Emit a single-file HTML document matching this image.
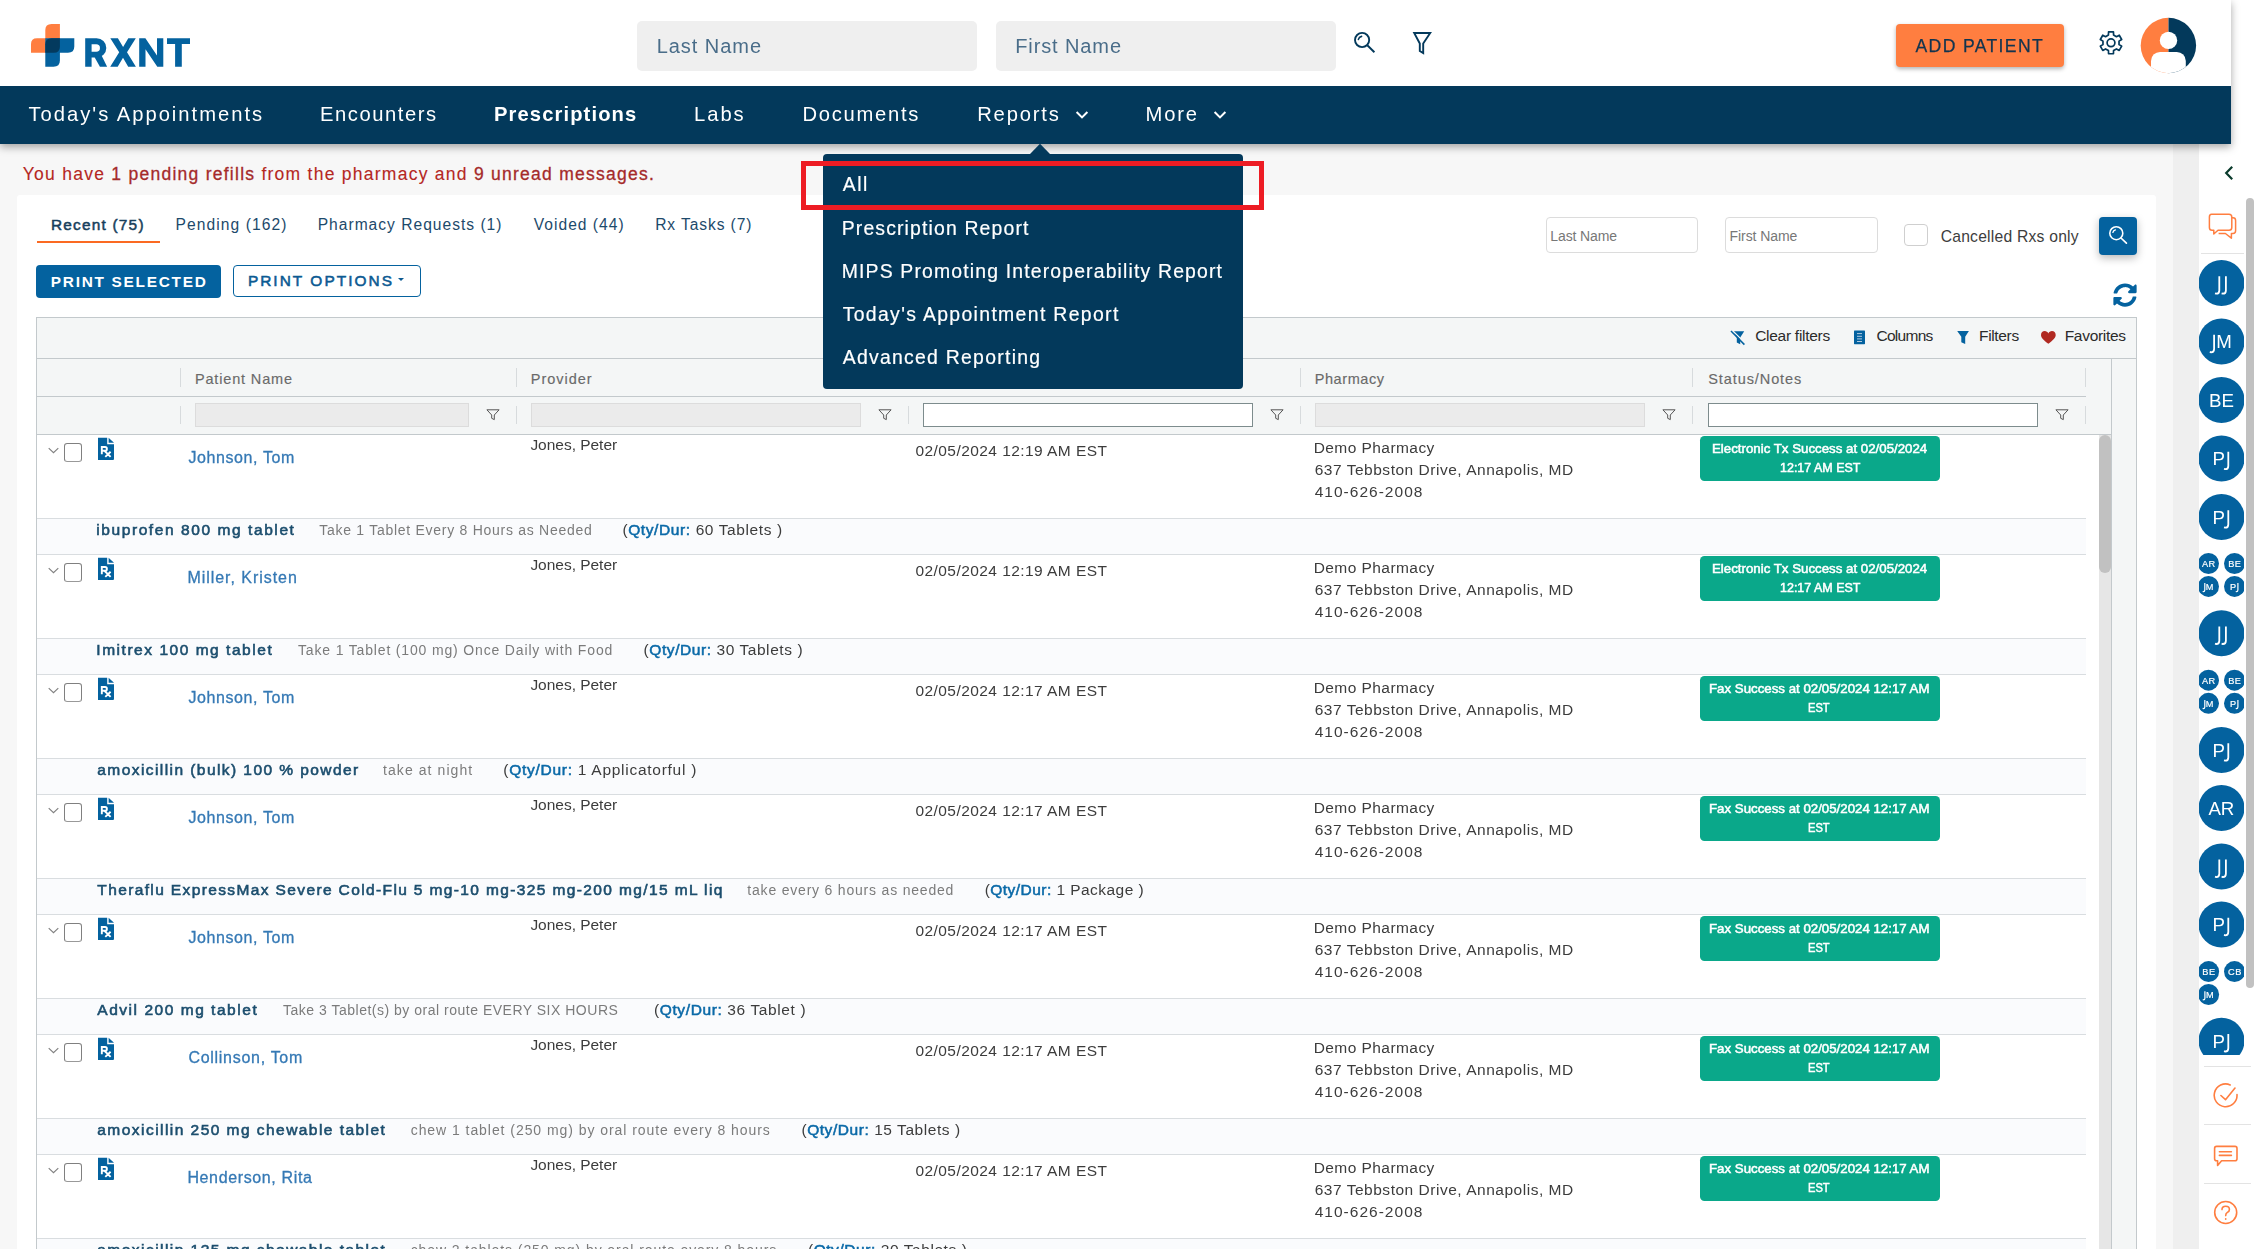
<!DOCTYPE html>
<html><head><meta charset="utf-8"><title>RXNT</title>
<style>
*{box-sizing:border-box;margin:0;padding:0}
html,body{width:2256px;height:1249px;overflow:hidden;background:#f7f7f7;font-family:"Liberation Sans",sans-serif}
.t{position:absolute;white-space:nowrap;line-height:1}
.a{position:absolute}
b{font-weight:700}
.g{position:absolute;left:0;top:0;width:2256px;height:1249px;will-change:transform}
#pg{position:absolute;left:0;top:0;width:2256px;height:1249px;overflow:hidden}
</style></head><body><div id="pg">

<div class="a" style="left:2173px;top:0;width:26px;height:1249px;background:#efefef"></div>
<div class="a" style="left:2199px;top:0;width:57px;height:1249px;background:#fff"></div>
<div class="a" style="left:17px;top:195px;width:2139px;height:1060px;background:#fff;border-radius:3px"></div>
<div id="t1" class="t" style="left:22.80px;top:166.19px;font-size:17.5px;color:#b5271f;font-weight:400;letter-spacing:1.258px;-webkit-text-stroke:0.12px #b5271f;">You have <span style="color:#a52a2a;-webkit-text-stroke:0.3px #a52a2a">1 pending refills</span> from the pharmacy and <span style="color:#a52a2a;-webkit-text-stroke:0.3px #a52a2a">9 unread messages.</span></div>
<div id="t2" class="t" style="left:50.90px;top:217.36px;font-size:15.4px;color:#173f5c;font-weight:400;letter-spacing:1.220px;-webkit-text-stroke:0.5px #173f5c;">Recent (75)</div>
<div class="a" style="left:37px;top:240.8px;width:123px;height:2.4px;background:#fb6a22"></div>
<div id="t3" class="t" style="left:175.60px;top:216.59px;font-size:15.6px;color:#1d4a6b;font-weight:400;letter-spacing:1.069px;">Pending (162)</div>
<div id="t4" class="t" style="left:317.70px;top:216.59px;font-size:15.6px;color:#1d4a6b;font-weight:400;letter-spacing:1.000px;">Pharmacy Requests (1)</div>
<div id="t5" class="t" style="left:533.80px;top:216.59px;font-size:15.6px;color:#1d4a6b;font-weight:400;letter-spacing:1.003px;">Voided (44)</div>
<div id="t6" class="t" style="left:655.20px;top:216.59px;font-size:15.6px;color:#1d4a6b;font-weight:400;letter-spacing:0.903px;">Rx Tasks (7)</div>
<div class="a" style="left:36px;top:265px;width:185px;height:33px;background:#04629f;border-radius:4px"></div>
<div id="t7" class="t" style="left:50.80px;top:274.16px;font-size:15.4px;color:#fff;font-weight:700;letter-spacing:1.728px;">PRINT SELECTED</div>
<div class="a" style="left:233px;top:265px;width:188px;height:32px;background:#fff;border:1px solid #04629f;border-radius:4px"></div>
<div id="t8" class="t" style="left:247.90px;top:273.26px;font-size:15.4px;color:#0c5a92;font-weight:400;letter-spacing:2.052px;-webkit-text-stroke:0.55px #0c5a92;">PRINT OPTIONS</div>
<div class="a" style="left:398.2px;top:278.2px;width:0;height:0;border-left:3.9px solid transparent;border-right:3.9px solid transparent;border-top:3.9px solid #0c5a92"></div>
<div class="a" style="left:1546px;top:217px;width:152px;height:36px;border:1px solid #dcdcdc;border-radius:4px;background:#fff"></div>
<div id="t9" class="t" style="left:1550.30px;top:229.45px;font-size:14px;color:#777;font-weight:400;letter-spacing:-0.115px;">Last Name</div>
<div class="a" style="left:1725px;top:217px;width:153px;height:36px;border:1px solid #dcdcdc;border-radius:4px;background:#fff"></div>
<div id="t10" class="t" style="left:1729.60px;top:229.45px;font-size:14px;color:#777;font-weight:400;letter-spacing:-0.074px;">First Name</div>
<div class="a" style="left:1904px;top:224px;width:24px;height:22px;border:1px solid #cfcfcf;border-radius:4px;background:#fff"></div>
<div id="t11" class="t" style="left:1940.70px;top:229.01px;font-size:15.7px;color:#3d3d3d;font-weight:400;letter-spacing:0.215px;">Cancelled Rxs only</div>
<div class="a" style="left:2099px;top:217px;width:38px;height:38px;background:#04629f;border-radius:4px;box-shadow:0 3px 8px rgba(0,0,0,.28)"></div>
<svg class="a" style="left:2099px;top:217px" width="38" height="38" viewBox="0 0 38 38"><circle cx="17.3" cy="16.2" r="6.5" fill="none" stroke="#fff" stroke-width="1.6"/><path d="M22 21 L27.4 26.2" stroke="#fff" stroke-width="1.7" stroke-linecap="round"/><path d="M13.9 15.4 A3.6 3.6 0 0 1 16.4 12.9" stroke="#fff" stroke-width="1.4" fill="none" stroke-linecap="round"/></svg>
<svg class="a" style="left:2112.6px;top:283.2px" width="24" height="24" viewBox="0 0 512 512"><path fill="#04629f" d="M370.72 133.28C339.458 104.008 298.888 87.962 255.848 88c-77.458.068-144.328 53.178-162.791 126.85-1.344 5.363-6.122 9.15-11.651 9.15H24.103c-7.498 0-13.194-6.807-11.807-14.176C33.933 94.924 134.813 8 256 8c66.448 0 126.791 26.136 171.315 68.685L463.03 40.97C478.149 25.851 504 36.559 504 57.941V192c0 13.255-10.745 24-24 24H345.941c-21.382 0-32.09-25.851-16.971-40.971l41.75-41.749zM32 296h134.059c21.382 0 32.09 25.851 16.971 40.971l-41.75 41.75c31.262 29.273 71.835 45.319 114.876 45.28 77.418-.07 144.315-53.144 162.787-126.849 1.344-5.363 6.122-9.15 11.651-9.15h57.304c7.498 0 13.194 6.807 11.807 14.176C478.067 417.076 377.187 504 256 504c-66.448 0-126.791-26.136-171.315-68.685L48.97 471.03C33.851 486.149 8 475.441 8 454.059V320c0-13.255 10.745-24 24-24z"/></svg>
<div class="a" style="left:36px;top:317px;width:2101px;height:940px;border:1px solid #c3c9cc;background:#fff"></div>
<div class="a" style="left:37px;top:318px;width:2099px;height:40px;background:#f4f6f6"></div>
<div class="a" style="left:37px;top:358px;width:2099px;height:1px;background:#c3c9cc"></div>
<div class="a" style="left:37px;top:359px;width:2074px;height:75px;background:#f4f6f6"></div>
<div class="a" style="left:37px;top:396px;width:2049px;height:1px;background:#c3c9cc"></div>
<div class="a" style="left:37px;top:434px;width:2074px;height:1px;background:#c3c9cc"></div>
<div class="a" style="left:2111px;top:359px;width:25px;height:900px;background:#f4f6f6;border-left:1px solid #c3c9cc"></div>
<div class="a" style="left:2099px;top:435px;width:12px;height:820px;background:#e6e6e6"></div>
<div class="a" style="left:2099px;top:435px;width:12px;height:138px;background:#c1c1c1;border-radius:6px"></div>
<div id="t12" class="t" style="left:1755.20px;top:327.98px;font-size:15.5px;color:#2b2b2b;font-weight:400;letter-spacing:-0.278px;">Clear filters</div>
<div id="t13" class="t" style="left:1876.50px;top:327.98px;font-size:15.5px;color:#2b2b2b;font-weight:400;letter-spacing:-0.720px;">Columns</div>
<div id="t14" class="t" style="left:1979.00px;top:327.98px;font-size:15.5px;color:#2b2b2b;font-weight:400;letter-spacing:-0.342px;">Filters</div>
<div id="t15" class="t" style="left:2064.70px;top:327.98px;font-size:15.5px;color:#2b2b2b;font-weight:400;letter-spacing:-0.300px;">Favorites</div>
<svg class="a" style="left:1730px;top:329px" width="17" height="17" viewBox="1730 329 17 17"><path d="M1733.6 331.2 H1744.2 L1740.2 337.4 V344.2 L1736.8 342.4 V337.4 Z" fill="#04629f"/><path d="M1732.2 330.2 L1745.6 343.6" stroke="#f4f6f6" stroke-width="1.3"/><path d="M1731 331 L1744.4 344.6" stroke="#04629f" stroke-width="1.5"/></svg>
<svg class="a" style="left:1853px;top:329px" width="14" height="17" viewBox="1853 329 14 17"><rect x="1854" y="330.6" width="11" height="13.6" rx="0.6" fill="#04629f"/><path d="M1857 333.6h5M1857 336.3h5M1857 338.9h5M1857 341.5h5" stroke="#c5d6e6" stroke-width="0.9"/></svg>
<svg class="a" style="left:1956px;top:330px" width="14" height="16" viewBox="1956 330 14 16"><path d="M1957.2 331.1 H1968.9 L1965.2 336.8 V344 L1961.3 342.2 V336.8 Z" fill="#04629f"/></svg>
<svg class="a" style="left:2040px;top:330px" width="17" height="15" viewBox="0 0 17 15"><path transform="translate(1 1.1) scale(0.93 0.905)" d="M7.9 14 C2.6 9.8 0 7.4 0 4.3 C0 1.8 1.8 0 4 0 C5.7 0 7.1 1 7.9 2.6 C8.7 1 10.1 0 11.8 0 C14 0 15.8 1.8 15.8 4.3 C15.8 7.4 13.2 9.8 7.9 14 Z" fill="#b02a22"/></svg>
<div id="t16" class="t" style="left:194.90px;top:371.93px;font-size:14.5px;color:#6a6a6a;font-weight:400;letter-spacing:0.846px;-webkit-text-stroke:0.15px #6a6a6a;">Patient Name</div>
<div id="t17" class="t" style="left:530.80px;top:371.93px;font-size:14.5px;color:#6a6a6a;font-weight:400;letter-spacing:0.976px;-webkit-text-stroke:0.15px #6a6a6a;">Provider</div>
<div id="t18" class="t" style="left:922.00px;top:371.93px;font-size:14.5px;color:#6a6a6a;font-weight:400;letter-spacing:0.808px;-webkit-text-stroke:0.15px #6a6a6a;">Date</div>
<div id="t19" class="t" style="left:1314.70px;top:371.93px;font-size:14.5px;color:#6a6a6a;font-weight:400;letter-spacing:0.581px;-webkit-text-stroke:0.15px #6a6a6a;">Pharmacy</div>
<div id="t20" class="t" style="left:1708.30px;top:371.93px;font-size:14.5px;color:#6a6a6a;font-weight:400;letter-spacing:0.903px;-webkit-text-stroke:0.15px #6a6a6a;">Status/Notes</div>
<div class="a" style="left:180px;top:368px;width:1px;height:19px;background:#d7dbdd"></div>
<div class="a" style="left:180px;top:406px;width:1px;height:18px;background:#d7dbdd"></div>
<div class="a" style="left:516px;top:368px;width:1px;height:19px;background:#d7dbdd"></div>
<div class="a" style="left:516px;top:406px;width:1px;height:18px;background:#d7dbdd"></div>
<div class="a" style="left:908px;top:368px;width:1px;height:19px;background:#d7dbdd"></div>
<div class="a" style="left:908px;top:406px;width:1px;height:18px;background:#d7dbdd"></div>
<div class="a" style="left:1300px;top:368px;width:1px;height:19px;background:#d7dbdd"></div>
<div class="a" style="left:1300px;top:406px;width:1px;height:18px;background:#d7dbdd"></div>
<div class="a" style="left:1692px;top:368px;width:1px;height:19px;background:#d7dbdd"></div>
<div class="a" style="left:1692px;top:406px;width:1px;height:18px;background:#d7dbdd"></div>
<div class="a" style="left:2085px;top:368px;width:1px;height:19px;background:#d7dbdd"></div>
<div class="a" style="left:2085px;top:406px;width:1px;height:18px;background:#d7dbdd"></div>
<div class="a" style="left:195px;top:403px;width:274px;height:24px;background:#ebebeb;border:1px solid #dcdcdc"></div>
<svg class="a" style="left:486px;top:409px" width="14" height="12" viewBox="0 0 14 12"><path d="M0.9 0.8 H13.1 L8.3 6 V10.6 L5.7 9.3 V6 Z" fill="none" stroke="#555" stroke-width="1" stroke-linejoin="round"/></svg>
<div class="a" style="left:531px;top:403px;width:330px;height:24px;background:#ebebeb;border:1px solid #dcdcdc"></div>
<svg class="a" style="left:878px;top:409px" width="14" height="12" viewBox="0 0 14 12"><path d="M0.9 0.8 H13.1 L8.3 6 V10.6 L5.7 9.3 V6 Z" fill="none" stroke="#555" stroke-width="1" stroke-linejoin="round"/></svg>
<div class="a" style="left:923px;top:403px;width:330px;height:24px;background:#fff;border:1px solid #7d8c8d"></div>
<svg class="a" style="left:1270px;top:409px" width="14" height="12" viewBox="0 0 14 12"><path d="M0.9 0.8 H13.1 L8.3 6 V10.6 L5.7 9.3 V6 Z" fill="none" stroke="#555" stroke-width="1" stroke-linejoin="round"/></svg>
<div class="a" style="left:1315px;top:403px;width:330px;height:24px;background:#ebebeb;border:1px solid #dcdcdc"></div>
<svg class="a" style="left:1662px;top:409px" width="14" height="12" viewBox="0 0 14 12"><path d="M0.9 0.8 H13.1 L8.3 6 V10.6 L5.7 9.3 V6 Z" fill="none" stroke="#555" stroke-width="1" stroke-linejoin="round"/></svg>
<div class="a" style="left:1708px;top:403px;width:330px;height:24px;background:#fff;border:1px solid #7d8c8d"></div>
<svg class="a" style="left:2055px;top:409px" width="14" height="12" viewBox="0 0 14 12"><path d="M0.9 0.8 H13.1 L8.3 6 V10.6 L5.7 9.3 V6 Z" fill="none" stroke="#555" stroke-width="1" stroke-linejoin="round"/></svg>
<div class="g">
<div class="a" style="left:37px;top:518px;width:2049px;height:37px;background:#fafbfd;border-top:1px solid #d9dde0;border-bottom:1px solid #d9dde0"></div>
<svg class="a" style="left:47px;top:446.9px" width="13" height="8" viewBox="0 0 13 8"><path d="M1.7 1.2 L6.5 5.6 L11.3 1.2" fill="none" stroke="#808080" stroke-width="1.15"/></svg>
<div class="a" style="left:64px;top:443.2px;width:18px;height:18.8px;border:1.6px solid #808080;border-bottom-color:#999;border-radius:3.2px;background:#fff"></div>
<svg class="a" style="left:97px;top:437.0px" width="18" height="24" viewBox="0 0 18 24"><path d="M1 0.8 H10.2 V7.2 H17 V21.9 Q17 22.9 16 22.9 H1 Z" fill="#04629f"/><path d="M11.6 0.8 L17 5.8 H11.6 Z" fill="#04629f"/><path d="M4.8 17.2 V10 H8 Q9.9 10 9.9 11.9 Q9.9 13.8 8 13.8 H4.8 M7.4 13.8 L13.6 19.9 M13.6 14.7 L8.3 19.9" fill="none" stroke="#fff" stroke-width="1.9"/></svg>
<div id="t21" class="t" style="left:188.40px;top:449.86px;font-size:16px;color:#3579b5;font-weight:400;letter-spacing:0.600px;-webkit-text-stroke:0.3px #3579b5;">Johnson, Tom</div>
<div id="t22" class="t" style="left:530.40px;top:437.18px;font-size:15.5px;color:#3c3c3c;font-weight:400;letter-spacing:-0.025px;">Jones, Peter</div>
<div id="t23" class="t" style="left:915.40px;top:443.18px;font-size:15.5px;color:#3c3c3c;font-weight:400;letter-spacing:0.443px;">02/05/2024 12:19 AM EST</div>
<div id="t24" class="t" style="left:1313.70px;top:440.18px;font-size:15.5px;color:#3c3c3c;font-weight:400;letter-spacing:0.434px;">Demo Pharmacy</div>
<div id="t25" class="t" style="left:1314.70px;top:462.08px;font-size:15.5px;color:#3c3c3c;font-weight:400;letter-spacing:0.521px;">637 Tebbston Drive, Annapolis, MD</div>
<div id="t26" class="t" style="left:1314.70px;top:483.88px;font-size:15.5px;color:#3c3c3c;font-weight:400;letter-spacing:1.017px;">410-626-2008</div>
<div class="a" style="left:1700px;top:436.0px;width:240px;height:44.7px;background:#0aa88a;border-radius:4.5px"></div>
<div id="t27" class="t" style="left:1711.93px;top:443.10px;font-size:12.4px;color:#fff;font-weight:400;letter-spacing:0.000px;-webkit-text-stroke:0.5px #fff;transform-origin:0 0;transform:scaleX(1.0715);">Electronic Tx Success at 02/05/2024</div>
<div id="t28" class="t" style="left:1779.70px;top:461.70px;font-size:12.4px;color:#fff;font-weight:400;letter-spacing:0.000px;-webkit-text-stroke:0.5px #fff;transform-origin:0 0;transform:scaleX(1.0070);">12:17 AM EST</div>
<div id="t29" class="t" style="left:96.30px;top:522.08px;font-size:15.5px;color:#1c4e6e;font-weight:400;letter-spacing:1.579px;-webkit-text-stroke:0.6px #1c4e6e;">ibuprofen 800 mg tablet</div>
<div id="t30" class="t" style="left:319.20px;top:523.35px;font-size:14px;color:#7b7b7b;font-weight:400;letter-spacing:0.726px;">Take 1 Tablet Every 8 Hours as Needed</div>
<div id="t31" class="t" style="left:622.40px;top:522.08px;font-size:15.5px;color:#3c3c3c;font-weight:400;letter-spacing:0.606px;">(<span style="color:#0b6aa8;-webkit-text-stroke:0.55px #0b6aa8">Qty/Dur:</span> 60 Tablets )</div>
<div class="a" style="left:37px;top:638px;width:2049px;height:37px;background:#fafbfd;border-top:1px solid #d9dde0;border-bottom:1px solid #d9dde0"></div>
<svg class="a" style="left:47px;top:566.9px" width="13" height="8" viewBox="0 0 13 8"><path d="M1.7 1.2 L6.5 5.6 L11.3 1.2" fill="none" stroke="#808080" stroke-width="1.15"/></svg>
<div class="a" style="left:64px;top:563.2px;width:18px;height:18.8px;border:1.6px solid #808080;border-bottom-color:#999;border-radius:3.2px;background:#fff"></div>
<svg class="a" style="left:97px;top:557.0px" width="18" height="24" viewBox="0 0 18 24"><path d="M1 0.8 H10.2 V7.2 H17 V21.9 Q17 22.9 16 22.9 H1 Z" fill="#04629f"/><path d="M11.6 0.8 L17 5.8 H11.6 Z" fill="#04629f"/><path d="M4.8 17.2 V10 H8 Q9.9 10 9.9 11.9 Q9.9 13.8 8 13.8 H4.8 M7.4 13.8 L13.6 19.9 M13.6 14.7 L8.3 19.9" fill="none" stroke="#fff" stroke-width="1.9"/></svg>
<div id="t32" class="t" style="left:187.40px;top:569.86px;font-size:16px;color:#3579b5;font-weight:400;letter-spacing:0.962px;-webkit-text-stroke:0.3px #3579b5;">Miller, Kristen</div>
<div id="t33" class="t" style="left:530.40px;top:557.18px;font-size:15.5px;color:#3c3c3c;font-weight:400;letter-spacing:-0.025px;">Jones, Peter</div>
<div id="t34" class="t" style="left:915.40px;top:563.18px;font-size:15.5px;color:#3c3c3c;font-weight:400;letter-spacing:0.443px;">02/05/2024 12:19 AM EST</div>
<div id="t35" class="t" style="left:1313.70px;top:560.18px;font-size:15.5px;color:#3c3c3c;font-weight:400;letter-spacing:0.434px;">Demo Pharmacy</div>
<div id="t36" class="t" style="left:1314.70px;top:582.08px;font-size:15.5px;color:#3c3c3c;font-weight:400;letter-spacing:0.521px;">637 Tebbston Drive, Annapolis, MD</div>
<div id="t37" class="t" style="left:1314.70px;top:603.88px;font-size:15.5px;color:#3c3c3c;font-weight:400;letter-spacing:1.017px;">410-626-2008</div>
<div class="a" style="left:1700px;top:556.0px;width:240px;height:44.7px;background:#0aa88a;border-radius:4.5px"></div>
<div id="t38" class="t" style="left:1711.93px;top:563.10px;font-size:12.4px;color:#fff;font-weight:400;letter-spacing:0.000px;-webkit-text-stroke:0.5px #fff;transform-origin:0 0;transform:scaleX(1.0715);">Electronic Tx Success at 02/05/2024</div>
<div id="t39" class="t" style="left:1779.70px;top:581.70px;font-size:12.4px;color:#fff;font-weight:400;letter-spacing:0.000px;-webkit-text-stroke:0.5px #fff;transform-origin:0 0;transform:scaleX(1.0070);">12:17 AM EST</div>
<div id="t40" class="t" style="left:96.30px;top:642.08px;font-size:15.5px;color:#1c4e6e;font-weight:400;letter-spacing:1.534px;-webkit-text-stroke:0.6px #1c4e6e;">Imitrex 100 mg tablet</div>
<div id="t41" class="t" style="left:298.00px;top:643.35px;font-size:14px;color:#7b7b7b;font-weight:400;letter-spacing:0.838px;">Take 1 Tablet (100 mg) Once Daily with Food</div>
<div id="t42" class="t" style="left:643.60px;top:642.08px;font-size:15.5px;color:#3c3c3c;font-weight:400;letter-spacing:0.568px;">(<span style="color:#0b6aa8;-webkit-text-stroke:0.55px #0b6aa8">Qty/Dur:</span> 30 Tablets )</div>
<div class="a" style="left:37px;top:758px;width:2049px;height:37px;background:#fafbfd;border-top:1px solid #d9dde0;border-bottom:1px solid #d9dde0"></div>
<svg class="a" style="left:47px;top:686.9px" width="13" height="8" viewBox="0 0 13 8"><path d="M1.7 1.2 L6.5 5.6 L11.3 1.2" fill="none" stroke="#808080" stroke-width="1.15"/></svg>
<div class="a" style="left:64px;top:683.2px;width:18px;height:18.8px;border:1.6px solid #808080;border-bottom-color:#999;border-radius:3.2px;background:#fff"></div>
<svg class="a" style="left:97px;top:677.0px" width="18" height="24" viewBox="0 0 18 24"><path d="M1 0.8 H10.2 V7.2 H17 V21.9 Q17 22.9 16 22.9 H1 Z" fill="#04629f"/><path d="M11.6 0.8 L17 5.8 H11.6 Z" fill="#04629f"/><path d="M4.8 17.2 V10 H8 Q9.9 10 9.9 11.9 Q9.9 13.8 8 13.8 H4.8 M7.4 13.8 L13.6 19.9 M13.6 14.7 L8.3 19.9" fill="none" stroke="#fff" stroke-width="1.9"/></svg>
<div id="t43" class="t" style="left:188.40px;top:689.86px;font-size:16px;color:#3579b5;font-weight:400;letter-spacing:0.600px;-webkit-text-stroke:0.3px #3579b5;">Johnson, Tom</div>
<div id="t44" class="t" style="left:530.40px;top:677.18px;font-size:15.5px;color:#3c3c3c;font-weight:400;letter-spacing:-0.025px;">Jones, Peter</div>
<div id="t45" class="t" style="left:915.40px;top:683.18px;font-size:15.5px;color:#3c3c3c;font-weight:400;letter-spacing:0.443px;">02/05/2024 12:17 AM EST</div>
<div id="t46" class="t" style="left:1313.70px;top:680.18px;font-size:15.5px;color:#3c3c3c;font-weight:400;letter-spacing:0.434px;">Demo Pharmacy</div>
<div id="t47" class="t" style="left:1314.70px;top:702.08px;font-size:15.5px;color:#3c3c3c;font-weight:400;letter-spacing:0.521px;">637 Tebbston Drive, Annapolis, MD</div>
<div id="t48" class="t" style="left:1314.70px;top:723.88px;font-size:15.5px;color:#3c3c3c;font-weight:400;letter-spacing:1.017px;">410-626-2008</div>
<div class="a" style="left:1700px;top:676.0px;width:240px;height:44.7px;background:#0aa88a;border-radius:4.5px"></div>
<div id="t49" class="t" style="left:1709.23px;top:683.10px;font-size:12.4px;color:#fff;font-weight:400;letter-spacing:0.000px;-webkit-text-stroke:0.5px #fff;transform-origin:0 0;transform:scaleX(1.0707);">Fax Success at 02/05/2024 12:17 AM</div>
<div id="t50" class="t" style="left:1808.40px;top:701.70px;font-size:12.4px;color:#fff;font-weight:400;letter-spacing:0.000px;-webkit-text-stroke:0.5px #fff;transform-origin:0 0;transform:scaleX(0.8963);">EST</div>
<div id="t51" class="t" style="left:97.30px;top:762.08px;font-size:15.5px;color:#1c4e6e;font-weight:400;letter-spacing:1.430px;-webkit-text-stroke:0.6px #1c4e6e;">amoxicillin (bulk) 100 % powder</div>
<div id="t52" class="t" style="left:383.00px;top:763.35px;font-size:14px;color:#7b7b7b;font-weight:400;letter-spacing:1.076px;">take at night</div>
<div id="t53" class="t" style="left:503.30px;top:762.08px;font-size:15.5px;color:#3c3c3c;font-weight:400;letter-spacing:0.732px;">(<span style="color:#0b6aa8;-webkit-text-stroke:0.55px #0b6aa8">Qty/Dur:</span> 1 Applicatorful )</div>
<div class="a" style="left:37px;top:878px;width:2049px;height:37px;background:#fafbfd;border-top:1px solid #d9dde0;border-bottom:1px solid #d9dde0"></div>
<svg class="a" style="left:47px;top:806.9px" width="13" height="8" viewBox="0 0 13 8"><path d="M1.7 1.2 L6.5 5.6 L11.3 1.2" fill="none" stroke="#808080" stroke-width="1.15"/></svg>
<div class="a" style="left:64px;top:803.2px;width:18px;height:18.8px;border:1.6px solid #808080;border-bottom-color:#999;border-radius:3.2px;background:#fff"></div>
<svg class="a" style="left:97px;top:797.0px" width="18" height="24" viewBox="0 0 18 24"><path d="M1 0.8 H10.2 V7.2 H17 V21.9 Q17 22.9 16 22.9 H1 Z" fill="#04629f"/><path d="M11.6 0.8 L17 5.8 H11.6 Z" fill="#04629f"/><path d="M4.8 17.2 V10 H8 Q9.9 10 9.9 11.9 Q9.9 13.8 8 13.8 H4.8 M7.4 13.8 L13.6 19.9 M13.6 14.7 L8.3 19.9" fill="none" stroke="#fff" stroke-width="1.9"/></svg>
<div id="t54" class="t" style="left:188.40px;top:809.86px;font-size:16px;color:#3579b5;font-weight:400;letter-spacing:0.600px;-webkit-text-stroke:0.3px #3579b5;">Johnson, Tom</div>
<div id="t55" class="t" style="left:530.40px;top:797.18px;font-size:15.5px;color:#3c3c3c;font-weight:400;letter-spacing:-0.025px;">Jones, Peter</div>
<div id="t56" class="t" style="left:915.40px;top:803.18px;font-size:15.5px;color:#3c3c3c;font-weight:400;letter-spacing:0.443px;">02/05/2024 12:17 AM EST</div>
<div id="t57" class="t" style="left:1313.70px;top:800.18px;font-size:15.5px;color:#3c3c3c;font-weight:400;letter-spacing:0.434px;">Demo Pharmacy</div>
<div id="t58" class="t" style="left:1314.70px;top:822.08px;font-size:15.5px;color:#3c3c3c;font-weight:400;letter-spacing:0.521px;">637 Tebbston Drive, Annapolis, MD</div>
<div id="t59" class="t" style="left:1314.70px;top:843.88px;font-size:15.5px;color:#3c3c3c;font-weight:400;letter-spacing:1.017px;">410-626-2008</div>
<div class="a" style="left:1700px;top:796.0px;width:240px;height:44.7px;background:#0aa88a;border-radius:4.5px"></div>
<div id="t60" class="t" style="left:1709.23px;top:803.10px;font-size:12.4px;color:#fff;font-weight:400;letter-spacing:0.000px;-webkit-text-stroke:0.5px #fff;transform-origin:0 0;transform:scaleX(1.0707);">Fax Success at 02/05/2024 12:17 AM</div>
<div id="t61" class="t" style="left:1808.40px;top:821.70px;font-size:12.4px;color:#fff;font-weight:400;letter-spacing:0.000px;-webkit-text-stroke:0.5px #fff;transform-origin:0 0;transform:scaleX(0.8963);">EST</div>
<div id="t62" class="t" style="left:97.30px;top:882.08px;font-size:15.5px;color:#1c4e6e;font-weight:400;letter-spacing:1.376px;-webkit-text-stroke:0.6px #1c4e6e;">Theraflu ExpressMax Severe Cold-Flu 5 mg-10 mg-325 mg-200 mg/15 mL liq</div>
<div id="t63" class="t" style="left:747.30px;top:883.35px;font-size:14px;color:#7b7b7b;font-weight:400;letter-spacing:0.801px;">take every 6 hours as needed</div>
<div id="t64" class="t" style="left:984.70px;top:882.08px;font-size:15.5px;color:#3c3c3c;font-weight:400;letter-spacing:0.453px;">(<span style="color:#0b6aa8;-webkit-text-stroke:0.55px #0b6aa8">Qty/Dur:</span> 1 Package )</div>
<div class="a" style="left:37px;top:998px;width:2049px;height:37px;background:#fafbfd;border-top:1px solid #d9dde0;border-bottom:1px solid #d9dde0"></div>
<svg class="a" style="left:47px;top:926.9px" width="13" height="8" viewBox="0 0 13 8"><path d="M1.7 1.2 L6.5 5.6 L11.3 1.2" fill="none" stroke="#808080" stroke-width="1.15"/></svg>
<div class="a" style="left:64px;top:923.2px;width:18px;height:18.8px;border:1.6px solid #808080;border-bottom-color:#999;border-radius:3.2px;background:#fff"></div>
<svg class="a" style="left:97px;top:917.0px" width="18" height="24" viewBox="0 0 18 24"><path d="M1 0.8 H10.2 V7.2 H17 V21.9 Q17 22.9 16 22.9 H1 Z" fill="#04629f"/><path d="M11.6 0.8 L17 5.8 H11.6 Z" fill="#04629f"/><path d="M4.8 17.2 V10 H8 Q9.9 10 9.9 11.9 Q9.9 13.8 8 13.8 H4.8 M7.4 13.8 L13.6 19.9 M13.6 14.7 L8.3 19.9" fill="none" stroke="#fff" stroke-width="1.9"/></svg>
<div id="t65" class="t" style="left:188.40px;top:929.86px;font-size:16px;color:#3579b5;font-weight:400;letter-spacing:0.600px;-webkit-text-stroke:0.3px #3579b5;">Johnson, Tom</div>
<div id="t66" class="t" style="left:530.40px;top:917.18px;font-size:15.5px;color:#3c3c3c;font-weight:400;letter-spacing:-0.025px;">Jones, Peter</div>
<div id="t67" class="t" style="left:915.40px;top:923.18px;font-size:15.5px;color:#3c3c3c;font-weight:400;letter-spacing:0.443px;">02/05/2024 12:17 AM EST</div>
<div id="t68" class="t" style="left:1313.70px;top:920.18px;font-size:15.5px;color:#3c3c3c;font-weight:400;letter-spacing:0.434px;">Demo Pharmacy</div>
<div id="t69" class="t" style="left:1314.70px;top:942.08px;font-size:15.5px;color:#3c3c3c;font-weight:400;letter-spacing:0.521px;">637 Tebbston Drive, Annapolis, MD</div>
<div id="t70" class="t" style="left:1314.70px;top:963.88px;font-size:15.5px;color:#3c3c3c;font-weight:400;letter-spacing:1.017px;">410-626-2008</div>
<div class="a" style="left:1700px;top:916.0px;width:240px;height:44.7px;background:#0aa88a;border-radius:4.5px"></div>
<div id="t71" class="t" style="left:1709.23px;top:923.10px;font-size:12.4px;color:#fff;font-weight:400;letter-spacing:0.000px;-webkit-text-stroke:0.5px #fff;transform-origin:0 0;transform:scaleX(1.0707);">Fax Success at 02/05/2024 12:17 AM</div>
<div id="t72" class="t" style="left:1808.40px;top:941.70px;font-size:12.4px;color:#fff;font-weight:400;letter-spacing:0.000px;-webkit-text-stroke:0.5px #fff;transform-origin:0 0;transform:scaleX(0.8963);">EST</div>
<div id="t73" class="t" style="left:97.30px;top:1002.08px;font-size:15.5px;color:#1c4e6e;font-weight:400;letter-spacing:1.532px;-webkit-text-stroke:0.6px #1c4e6e;">Advil 200 mg tablet</div>
<div id="t74" class="t" style="left:283.00px;top:1003.35px;font-size:14px;color:#7b7b7b;font-weight:400;letter-spacing:0.507px;">Take 3 Tablet(s) by oral route EVERY SIX HOURS</div>
<div id="t75" class="t" style="left:654.00px;top:1002.08px;font-size:15.5px;color:#3c3c3c;font-weight:400;letter-spacing:0.614px;">(<span style="color:#0b6aa8;-webkit-text-stroke:0.55px #0b6aa8">Qty/Dur:</span> 36 Tablet )</div>
<div class="a" style="left:37px;top:1118px;width:2049px;height:37px;background:#fafbfd;border-top:1px solid #d9dde0;border-bottom:1px solid #d9dde0"></div>
<svg class="a" style="left:47px;top:1046.9px" width="13" height="8" viewBox="0 0 13 8"><path d="M1.7 1.2 L6.5 5.6 L11.3 1.2" fill="none" stroke="#808080" stroke-width="1.15"/></svg>
<div class="a" style="left:64px;top:1043.2px;width:18px;height:18.8px;border:1.6px solid #808080;border-bottom-color:#999;border-radius:3.2px;background:#fff"></div>
<svg class="a" style="left:97px;top:1037.0px" width="18" height="24" viewBox="0 0 18 24"><path d="M1 0.8 H10.2 V7.2 H17 V21.9 Q17 22.9 16 22.9 H1 Z" fill="#04629f"/><path d="M11.6 0.8 L17 5.8 H11.6 Z" fill="#04629f"/><path d="M4.8 17.2 V10 H8 Q9.9 10 9.9 11.9 Q9.9 13.8 8 13.8 H4.8 M7.4 13.8 L13.6 19.9 M13.6 14.7 L8.3 19.9" fill="none" stroke="#fff" stroke-width="1.9"/></svg>
<div id="t76" class="t" style="left:188.40px;top:1049.86px;font-size:16px;color:#3579b5;font-weight:400;letter-spacing:0.714px;-webkit-text-stroke:0.3px #3579b5;">Collinson, Tom</div>
<div id="t77" class="t" style="left:530.40px;top:1037.18px;font-size:15.5px;color:#3c3c3c;font-weight:400;letter-spacing:-0.025px;">Jones, Peter</div>
<div id="t78" class="t" style="left:915.40px;top:1043.18px;font-size:15.5px;color:#3c3c3c;font-weight:400;letter-spacing:0.443px;">02/05/2024 12:17 AM EST</div>
<div id="t79" class="t" style="left:1313.70px;top:1040.18px;font-size:15.5px;color:#3c3c3c;font-weight:400;letter-spacing:0.434px;">Demo Pharmacy</div>
<div id="t80" class="t" style="left:1314.70px;top:1062.08px;font-size:15.5px;color:#3c3c3c;font-weight:400;letter-spacing:0.521px;">637 Tebbston Drive, Annapolis, MD</div>
<div id="t81" class="t" style="left:1314.70px;top:1083.88px;font-size:15.5px;color:#3c3c3c;font-weight:400;letter-spacing:1.017px;">410-626-2008</div>
<div class="a" style="left:1700px;top:1036.0px;width:240px;height:44.7px;background:#0aa88a;border-radius:4.5px"></div>
<div id="t82" class="t" style="left:1709.23px;top:1043.10px;font-size:12.4px;color:#fff;font-weight:400;letter-spacing:0.000px;-webkit-text-stroke:0.5px #fff;transform-origin:0 0;transform:scaleX(1.0707);">Fax Success at 02/05/2024 12:17 AM</div>
<div id="t83" class="t" style="left:1808.40px;top:1061.70px;font-size:12.4px;color:#fff;font-weight:400;letter-spacing:0.000px;-webkit-text-stroke:0.5px #fff;transform-origin:0 0;transform:scaleX(0.8963);">EST</div>
<div id="t84" class="t" style="left:97.30px;top:1122.08px;font-size:15.5px;color:#1c4e6e;font-weight:400;letter-spacing:1.457px;-webkit-text-stroke:0.6px #1c4e6e;">amoxicillin 250 mg chewable tablet</div>
<div id="t85" class="t" style="left:410.70px;top:1123.35px;font-size:14px;color:#7b7b7b;font-weight:400;letter-spacing:0.944px;">chew 1 tablet (250 mg) by oral route every 8 hours</div>
<div id="t86" class="t" style="left:801.40px;top:1122.08px;font-size:15.5px;color:#3c3c3c;font-weight:400;letter-spacing:0.559px;">(<span style="color:#0b6aa8;-webkit-text-stroke:0.55px #0b6aa8">Qty/Dur:</span> 15 Tablets )</div>
<div class="a" style="left:37px;top:1238px;width:2049px;height:37px;background:#fafbfd;border-top:1px solid #d9dde0;border-bottom:1px solid #d9dde0"></div>
<svg class="a" style="left:47px;top:1166.9px" width="13" height="8" viewBox="0 0 13 8"><path d="M1.7 1.2 L6.5 5.6 L11.3 1.2" fill="none" stroke="#808080" stroke-width="1.15"/></svg>
<div class="a" style="left:64px;top:1163.2px;width:18px;height:18.8px;border:1.6px solid #808080;border-bottom-color:#999;border-radius:3.2px;background:#fff"></div>
<svg class="a" style="left:97px;top:1157.0px" width="18" height="24" viewBox="0 0 18 24"><path d="M1 0.8 H10.2 V7.2 H17 V21.9 Q17 22.9 16 22.9 H1 Z" fill="#04629f"/><path d="M11.6 0.8 L17 5.8 H11.6 Z" fill="#04629f"/><path d="M4.8 17.2 V10 H8 Q9.9 10 9.9 11.9 Q9.9 13.8 8 13.8 H4.8 M7.4 13.8 L13.6 19.9 M13.6 14.7 L8.3 19.9" fill="none" stroke="#fff" stroke-width="1.9"/></svg>
<div id="t87" class="t" style="left:187.40px;top:1169.86px;font-size:16px;color:#3579b5;font-weight:400;letter-spacing:0.634px;-webkit-text-stroke:0.3px #3579b5;">Henderson, Rita</div>
<div id="t88" class="t" style="left:530.40px;top:1157.18px;font-size:15.5px;color:#3c3c3c;font-weight:400;letter-spacing:-0.025px;">Jones, Peter</div>
<div id="t89" class="t" style="left:915.40px;top:1163.18px;font-size:15.5px;color:#3c3c3c;font-weight:400;letter-spacing:0.443px;">02/05/2024 12:17 AM EST</div>
<div id="t90" class="t" style="left:1313.70px;top:1160.18px;font-size:15.5px;color:#3c3c3c;font-weight:400;letter-spacing:0.434px;">Demo Pharmacy</div>
<div id="t91" class="t" style="left:1314.70px;top:1182.08px;font-size:15.5px;color:#3c3c3c;font-weight:400;letter-spacing:0.521px;">637 Tebbston Drive, Annapolis, MD</div>
<div id="t92" class="t" style="left:1314.70px;top:1203.88px;font-size:15.5px;color:#3c3c3c;font-weight:400;letter-spacing:1.017px;">410-626-2008</div>
<div class="a" style="left:1700px;top:1156.0px;width:240px;height:44.7px;background:#0aa88a;border-radius:4.5px"></div>
<div id="t93" class="t" style="left:1709.23px;top:1163.10px;font-size:12.4px;color:#fff;font-weight:400;letter-spacing:0.000px;-webkit-text-stroke:0.5px #fff;transform-origin:0 0;transform:scaleX(1.0707);">Fax Success at 02/05/2024 12:17 AM</div>
<div id="t94" class="t" style="left:1808.40px;top:1181.70px;font-size:12.4px;color:#fff;font-weight:400;letter-spacing:0.000px;-webkit-text-stroke:0.5px #fff;transform-origin:0 0;transform:scaleX(0.8963);">EST</div>
<div id="t95" class="t" style="left:97.30px;top:1242.08px;font-size:15.5px;color:#1c4e6e;font-weight:400;letter-spacing:1.457px;-webkit-text-stroke:0.6px #1c4e6e;">amoxicillin 125 mg chewable tablet</div>
<div id="t96" class="t" style="left:410.70px;top:1243.35px;font-size:14px;color:#7b7b7b;font-weight:400;letter-spacing:0.915px;">chew 2 tablets (250 mg) by oral route every 8 hours</div>
<div id="t97" class="t" style="left:807.90px;top:1242.08px;font-size:15.5px;color:#3c3c3c;font-weight:400;letter-spacing:0.568px;">(<span style="color:#0b6aa8;-webkit-text-stroke:0.55px #0b6aa8">Qty/Dur:</span> 20 Tablets )</div>
</div>
<div class="a" style="left:2199px;top:150px;width:45px;height:905px;overflow:hidden">
<svg class="a" style="left:0;top:0" width="47" height="905" viewBox="0 0 47 905">
<circle cx="22.50" cy="133.00" r="23.00" fill="#04629f"/><path d="M20.30 126.18 V140.42 Q20.30 143.72 17.30 143.72 L16.00 143.32" fill="none" stroke="#fff" stroke-width="1.80" stroke-linejoin="round"/><path d="M26.90 126.18 V140.42 Q26.90 143.72 23.90 143.72 L22.60 143.32" fill="none" stroke="#fff" stroke-width="1.80" stroke-linejoin="round"/>
<circle cx="22.50" cy="191.60" r="23.00" fill="#04629f"/><path d="M15.10 184.78 V199.02 Q15.10 202.32 12.10 202.32 L10.80 201.92" fill="none" stroke="#fff" stroke-width="1.80" stroke-linejoin="round"/><text x="17.20" y="198.42" font-size="18.70" fill="#fff" font-family="Liberation Sans,sans-serif">M</text>
<circle cx="22.50" cy="250.00" r="23.00" fill="#04629f"/><text x="10.00" y="256.82" font-size="18.70" fill="#fff" font-family="Liberation Sans,sans-serif">BE</text>
<circle cx="22.50" cy="308.50" r="23.00" fill="#04629f"/><text x="13.50" y="315.32" font-size="18.70" fill="#fff" font-family="Liberation Sans,sans-serif">P</text><path d="M29.30 301.68 V315.92 Q29.30 319.22 26.30 319.22 L25.00 318.82" fill="none" stroke="#fff" stroke-width="1.80" stroke-linejoin="round"/>
<circle cx="22.50" cy="367.00" r="23.00" fill="#04629f"/><text x="13.50" y="373.82" font-size="18.70" fill="#fff" font-family="Liberation Sans,sans-serif">P</text><path d="M29.30 360.18 V374.42 Q29.30 377.72 26.30 377.72 L25.00 377.32" fill="none" stroke="#fff" stroke-width="1.80" stroke-linejoin="round"/>
<circle cx="22.50" cy="483.30" r="23.00" fill="#04629f"/><path d="M20.30 476.48 V490.72 Q20.30 494.02 17.30 494.02 L16.00 493.62" fill="none" stroke="#fff" stroke-width="1.80" stroke-linejoin="round"/><path d="M26.90 476.48 V490.72 Q26.90 494.02 23.90 494.02 L22.60 493.62" fill="none" stroke="#fff" stroke-width="1.80" stroke-linejoin="round"/>
<circle cx="22.50" cy="600.00" r="23.00" fill="#04629f"/><text x="13.50" y="606.82" font-size="18.70" fill="#fff" font-family="Liberation Sans,sans-serif">P</text><path d="M29.30 593.18 V607.42 Q29.30 610.72 26.30 610.72 L25.00 610.32" fill="none" stroke="#fff" stroke-width="1.80" stroke-linejoin="round"/>
<circle cx="22.50" cy="658.00" r="23.00" fill="#04629f"/><text x="9.40" y="664.82" font-size="18.70" fill="#fff" font-family="Liberation Sans,sans-serif">AR</text>
<circle cx="22.50" cy="716.40" r="23.00" fill="#04629f"/><path d="M20.30 709.58 V723.82 Q20.30 727.12 17.30 727.12 L16.00 726.72" fill="none" stroke="#fff" stroke-width="1.80" stroke-linejoin="round"/><path d="M26.90 709.58 V723.82 Q26.90 727.12 23.90 727.12 L22.60 726.72" fill="none" stroke="#fff" stroke-width="1.80" stroke-linejoin="round"/>
<circle cx="22.50" cy="774.60" r="23.00" fill="#04629f"/><text x="13.50" y="781.42" font-size="18.70" fill="#fff" font-family="Liberation Sans,sans-serif">P</text><path d="M29.30 767.78 V782.02 Q29.30 785.32 26.30 785.32 L25.00 784.92" fill="none" stroke="#fff" stroke-width="1.80" stroke-linejoin="round"/>
<circle cx="22.50" cy="890.80" r="23.00" fill="#04629f"/><text x="13.50" y="897.62" font-size="18.70" fill="#fff" font-family="Liberation Sans,sans-serif">P</text><path d="M29.30 883.98 V898.22 Q29.30 901.52 26.30 901.52 L25.00 901.12" fill="none" stroke="#fff" stroke-width="1.80" stroke-linejoin="round"/>
<circle cx="9.50" cy="413.50" r="10.50" fill="#04629f"/><text x="2.95" y="416.85" font-size="9.20" fill="#fff" font-family="Liberation Sans,sans-serif" stroke="#fff" stroke-width="0.2" letter-spacing="0.45">AR</text>
<circle cx="35.50" cy="413.50" r="10.50" fill="#04629f"/><text x="29.25" y="416.85" font-size="9.20" fill="#fff" font-family="Liberation Sans,sans-serif" stroke="#fff" stroke-width="0.2" letter-spacing="0.45">BE</text>
<circle cx="9.50" cy="436.40" r="10.50" fill="#04629f"/><path d="M5.80 433.05 V440.05 Q5.80 441.70 4.30 441.70 L3.65 441.50" fill="none" stroke="#fff" stroke-width="1.20" stroke-linejoin="round"/><text x="6.85" y="439.75" font-size="9.20" fill="#fff" font-family="Liberation Sans,sans-serif" stroke="#fff" stroke-width="0.2" letter-spacing="0.45">M</text>
<circle cx="35.50" cy="436.40" r="10.50" fill="#04629f"/><text x="31.00" y="439.75" font-size="9.20" fill="#fff" font-family="Liberation Sans,sans-serif" stroke="#fff" stroke-width="0.2" letter-spacing="0.45">P</text><path d="M38.90 433.05 V440.05 Q38.90 441.70 37.40 441.70 L36.75 441.50" fill="none" stroke="#fff" stroke-width="1.20" stroke-linejoin="round"/>
<circle cx="9.50" cy="530.20" r="10.50" fill="#04629f"/><text x="2.95" y="533.55" font-size="9.20" fill="#fff" font-family="Liberation Sans,sans-serif" stroke="#fff" stroke-width="0.2" letter-spacing="0.45">AR</text>
<circle cx="35.50" cy="530.20" r="10.50" fill="#04629f"/><text x="29.25" y="533.55" font-size="9.20" fill="#fff" font-family="Liberation Sans,sans-serif" stroke="#fff" stroke-width="0.2" letter-spacing="0.45">BE</text>
<circle cx="9.50" cy="553.30" r="10.50" fill="#04629f"/><path d="M5.80 549.95 V556.95 Q5.80 558.60 4.30 558.60 L3.65 558.40" fill="none" stroke="#fff" stroke-width="1.20" stroke-linejoin="round"/><text x="6.85" y="556.65" font-size="9.20" fill="#fff" font-family="Liberation Sans,sans-serif" stroke="#fff" stroke-width="0.2" letter-spacing="0.45">M</text>
<circle cx="35.50" cy="553.30" r="10.50" fill="#04629f"/><text x="31.00" y="556.65" font-size="9.20" fill="#fff" font-family="Liberation Sans,sans-serif" stroke="#fff" stroke-width="0.2" letter-spacing="0.45">P</text><path d="M38.90 549.95 V556.95 Q38.90 558.60 37.40 558.60 L36.75 558.40" fill="none" stroke="#fff" stroke-width="1.20" stroke-linejoin="round"/>
<circle cx="9.60" cy="821.60" r="10.50" fill="#04629f"/><text x="3.35" y="824.95" font-size="9.20" fill="#fff" font-family="Liberation Sans,sans-serif" stroke="#fff" stroke-width="0.2" letter-spacing="0.45">BE</text>
<circle cx="35.50" cy="821.60" r="10.50" fill="#04629f"/><text x="29.10" y="824.95" font-size="9.20" fill="#fff" font-family="Liberation Sans,sans-serif" stroke="#fff" stroke-width="0.2" letter-spacing="0.45">CB</text>
<circle cx="9.60" cy="844.50" r="10.50" fill="#04629f"/><path d="M5.90 841.15 V848.15 Q5.90 849.80 4.40 849.80 L3.75 849.60" fill="none" stroke="#fff" stroke-width="1.20" stroke-linejoin="round"/><text x="6.95" y="847.85" font-size="9.20" fill="#fff" font-family="Liberation Sans,sans-serif" stroke="#fff" stroke-width="0.2" letter-spacing="0.45">M</text>
</svg>
</div>
<svg class="a" style="left:2222px;top:164px" width="14" height="18" viewBox="0 0 14 18"><path d="M10.2 2.8 L4.2 9 L10.2 15.2" fill="none" stroke="#0a3b2c" stroke-width="2.2"/></svg>
<svg class="a" style="left:2207px;top:211px" width="32" height="30" viewBox="0 0 32 30"><g fill="none" stroke="#ff7e40" stroke-width="1.5" stroke-linejoin="round"><path d="M4.5 3.2 H22 Q24.8 3.2 24.8 6 V16.4 Q24.8 19.2 22 19.2 H11 L6.8 23 V19.2 H5 Q2.4 19.2 2.4 16.4 V6 Q2.4 3.2 4.5 3.2 Z"/><path d="M24.8 6.8 H26 Q28.6 6.8 28.6 9.4 V19.8 Q28.6 22.5 26 22.5 H24.4 V27.2 L18.4 22.5 H11.6"/></g></svg>
<div class="a" style="left:2201px;top:253px;width:43px;height:1px;background:#e3e3e3"></div>
<div class="a" style="left:2204px;top:1066px;width:47px;height:1px;background:#e3e3e3"></div>
<div class="a" style="left:2204px;top:1124px;width:47px;height:1px;background:#e3e3e3"></div>
<div class="a" style="left:2204px;top:1183px;width:47px;height:1px;background:#e3e3e3"></div>
<div class="a" style="left:2246px;top:198px;width:8px;height:790px;border-radius:4px;background:#c1c1c1"></div>
<svg class="a" style="left:2212px;top:1082px" width="28" height="28" viewBox="0 0 28 28"><g fill="none" stroke="#ff7e40" stroke-width="1.6" stroke-linecap="round" stroke-linejoin="round"><path d="M25 12.6 A11.4 11.4 0 1 1 18.2 2.9"/><path d="M8.9 13.5 L13.5 17.7 L23 6"/></g></svg>
<svg class="a" style="left:2212px;top:1143px" width="28" height="26" viewBox="0 0 28 26"><g fill="none" stroke="#ff7e40" stroke-width="1.6" stroke-linecap="round" stroke-linejoin="round"><path d="M4.6 3.4 H23 Q25 3.4 25 5.4 V15.8 Q25 17.8 23 17.8 H9.6 L5.6 22.4 V17.8 H4.6 Q2.6 17.8 2.6 15.8 V5.4 Q2.6 3.4 4.6 3.4 Z"/><path d="M7.4 8.8 H19.4 M7.4 12.4 H19.4"/></g></svg>
<svg class="a" style="left:2212px;top:1199px" width="28" height="28" viewBox="0 0 28 28"><g fill="none" stroke="#ff7e40" stroke-width="1.6" stroke-linecap="round"><circle cx="13.7" cy="13.5" r="11"/><path d="M10 10.6 Q10 7.2 13.7 7.2 Q17.4 7.2 17.4 10.4 Q17.4 12.4 15.4 13.4 Q13.7 14.4 13.7 16.6"/><path d="M13.7 19.8 V20.2"/></g></svg>
<div class="a" style="left:0;top:0;width:2231px;height:144px;background:#fff;box-shadow:0 3px 8px rgba(0,0,0,.35)"></div>
<div class="a" style="left:0;top:86px;width:2231px;height:58px;background:#03395b"></div>
<svg class="a" style="left:30px;top:23px" width="46" height="45" viewBox="30 23 46 45"><path d="M45.3 52.7 H31 V44 Q31 38.2 37 38.2 H45.3 V30 Q45.3 24 51.5 24 H59.9 V52.7 Z" fill="#ff7e40"/><path d="M45.3 38.2 H74.3 V46.5 Q74.3 52.7 68 52.7 H59.9 V60.5 Q59.9 66.7 53.5 66.7 H45.3 Z" fill="#04629f"/><path d="M45.3 52.7 V44.2 Q45.3 38.2 51.5 38.2 H59.9 V46.7 Q59.9 52.7 53.7 52.7 Z" fill="#033a5e"/></svg>
<svg class="a" style="left:84px;top:37px" width="108" height="31" viewBox="84 37 108 31"><g fill="#04629f"><path fill-rule="evenodd" d="M85.2 38.2 H96.6 A9.7 9.7 0 0 1 96.6 57.6 H91.6 V66.7 H85.2 Z M91.6 44.2 V51.7 H96.2 A3.75 3.75 0 0 0 96.2 44.2 Z"/><path d="M94.6 57.2 L101.6 55.6 L107.1 66.7 H99.9 Z"/><path d="M110.3 38.2 H117.9 L123.1 47 L128.3 38.2 H135.8 L127 52.2 L135.9 66.7 H128.2 L123 57.8 L117.7 66.7 H110.2 L119.2 52.2 Z"/><path d="M139.2 38.2 H145.4 L157 55.6 V38.2 H163.3 V66.7 H157.3 L145.5 49.2 V66.7 H139.2 Z"/><path d="M167 38.2 H190 V44 H181.8 V66.7 H175.1 V44 H167 Z"/></g></svg>
<div class="a" style="left:637px;top:21px;width:340px;height:50px;background:#efefef;border-radius:5px"></div>
<div class="a" style="left:996px;top:21px;width:340px;height:50px;background:#efefef;border-radius:5px"></div>
<div id="t98" class="t" style="left:656.70px;top:36.37px;font-size:20px;color:#4a6d89;font-weight:400;letter-spacing:0.963px;">Last Name</div>
<div id="t99" class="t" style="left:1015.20px;top:36.37px;font-size:20px;color:#4a6d89;font-weight:400;letter-spacing:0.892px;">First Name</div>
<svg class="a" style="left:1350px;top:28px" width="30" height="30" viewBox="1350 28 30 30"><g fill="none" stroke="#03395b" stroke-width="1.9"><circle cx="1362.1" cy="40" r="7.1"/><path d="M1367.3 45.3 L1374.4 52.2"/><path d="M1358.4 39.4 A4 4 0 0 1 1361.6 36.4" stroke-linecap="round" stroke-width="1.6"/></g></svg>
<svg class="a" style="left:1408px;top:28px" width="30" height="30" viewBox="1408 28 30 30"><path d="M1414.2 33 H1430.2 L1423.2 43.6 V53 L1419.8 51 V43.6 Z" fill="none" stroke="#03395b" stroke-width="1.9" stroke-linejoin="miter"/></svg>
<div class="a" style="left:1896px;top:24px;width:168px;height:43px;background:#ff7e40;border-radius:4px;box-shadow:0 2px 4px rgba(0,0,0,.3)"></div>
<div id="t100" class="t" style="left:1915.50px;top:37.70px;font-size:17.6px;color:#12344f;font-weight:400;letter-spacing:1.353px;-webkit-text-stroke:0.25px #12344f;">ADD PATIENT</div>
<svg class="a" style="left:2096px;top:28px" width="30" height="30" viewBox="2096 28 30 30"><g fill="none" stroke="#03395b" stroke-width="1.7" stroke-linejoin="round"><path d="M2108.42 35.02 L2108.56 31.87 L2113.44 31.87 L2113.58 35.02 L2116.45 36.67 L2119.24 35.22 L2121.69 39.45 L2119.03 41.14 L2119.03 44.46 L2121.69 46.15 L2119.24 50.38 L2116.45 48.93 L2113.58 50.58 L2113.44 53.73 L2108.56 53.73 L2108.42 50.58 L2105.55 48.93 L2102.76 50.38 L2100.31 46.15 L2102.97 44.46 L2102.97 41.14 L2100.31 39.45 L2102.76 35.22 L2105.55 36.67 Z"/><circle cx="2111" cy="42.8" r="3.9"/></g></svg>
<svg class="a" style="left:2140px;top:17px" width="57" height="57" viewBox="2140 17 57 57"><defs><clipPath id="av"><circle cx="2168.4" cy="45.5" r="27.7"/></clipPath></defs><g clip-path="url(#av)"><rect x="2140" y="17" width="28.5" height="57" fill="#ff7e40"/><rect x="2168.5" y="17" width="28.5" height="57" fill="#03395b"/><circle cx="2168.5" cy="40.4" r="8.7" fill="#fff"/><rect x="2151" y="51.9" width="34.8" height="40" rx="9" fill="#fff"/></g></svg>
<div class="g">
<div id="t101" class="t" style="left:28.50px;top:103.70px;font-size:20.2px;color:#fff;font-weight:400;letter-spacing:1.991px;">Today's Appointments</div>
<div id="t102" class="t" style="left:320.00px;top:103.70px;font-size:20.2px;color:#fff;font-weight:400;letter-spacing:1.552px;">Encounters</div>
<div id="t103" class="t" style="left:494.00px;top:103.70px;font-size:20.2px;color:#fff;font-weight:700;letter-spacing:1.100px;">Prescriptions</div>
<div id="t104" class="t" style="left:694.00px;top:103.70px;font-size:20.2px;color:#fff;font-weight:400;letter-spacing:1.971px;">Labs</div>
<div id="t105" class="t" style="left:802.50px;top:103.70px;font-size:20.2px;color:#fff;font-weight:400;letter-spacing:1.723px;">Documents</div>
<div id="t106" class="t" style="left:977.20px;top:103.70px;font-size:20.2px;color:#fff;font-weight:400;letter-spacing:1.834px;">Reports</div>
<div id="t107" class="t" style="left:1145.50px;top:103.70px;font-size:20.2px;color:#fff;font-weight:400;letter-spacing:1.842px;">More</div>
<svg class="a" style="left:1075.3px;top:110px" width="14" height="10" viewBox="0 0 14 10"><path d="M1.6 2 L7 7.4 L12.4 2" fill="none" stroke="#fff" stroke-width="2"/></svg>
<svg class="a" style="left:1213.3px;top:110px" width="14" height="10" viewBox="0 0 14 10"><path d="M1.6 2 L7 7.4 L12.4 2" fill="none" stroke="#fff" stroke-width="2"/></svg>
<div class="a" style="left:823px;top:154px;width:420px;height:235px;background:#03395b;border-radius:4px"></div>
<svg class="a" style="left:1028px;top:143px" width="24" height="12" viewBox="0 0 24 12"><path d="M2 11 L12 0.8 L22 11 Z" fill="#03395b"/></svg>
<div id="t108" class="t" style="left:842.70px;top:174.68px;font-size:19.4px;color:#fff;font-weight:400;letter-spacing:1.573px;-webkit-text-stroke:0.2px #fff;">All</div>
<div id="t109" class="t" style="left:841.70px;top:218.98px;font-size:19.4px;color:#fff;font-weight:400;letter-spacing:1.151px;-webkit-text-stroke:0.2px #fff;">Prescription Report</div>
<div id="t110" class="t" style="left:841.70px;top:261.68px;font-size:19.4px;color:#fff;font-weight:400;letter-spacing:1.161px;-webkit-text-stroke:0.2px #fff;">MIPS Promoting Interoperability Report</div>
<div id="t111" class="t" style="left:842.70px;top:305.08px;font-size:19.4px;color:#fff;font-weight:400;letter-spacing:1.347px;-webkit-text-stroke:0.2px #fff;">Today's Appointment Report</div>
<div id="t112" class="t" style="left:842.70px;top:347.78px;font-size:19.4px;color:#fff;font-weight:400;letter-spacing:1.274px;-webkit-text-stroke:0.2px #fff;">Advanced Reporting</div>
</div>
<div class="a" style="left:801px;top:161px;width:463px;height:49px;border:5px solid #ed1c24"></div>
</div></body></html>
